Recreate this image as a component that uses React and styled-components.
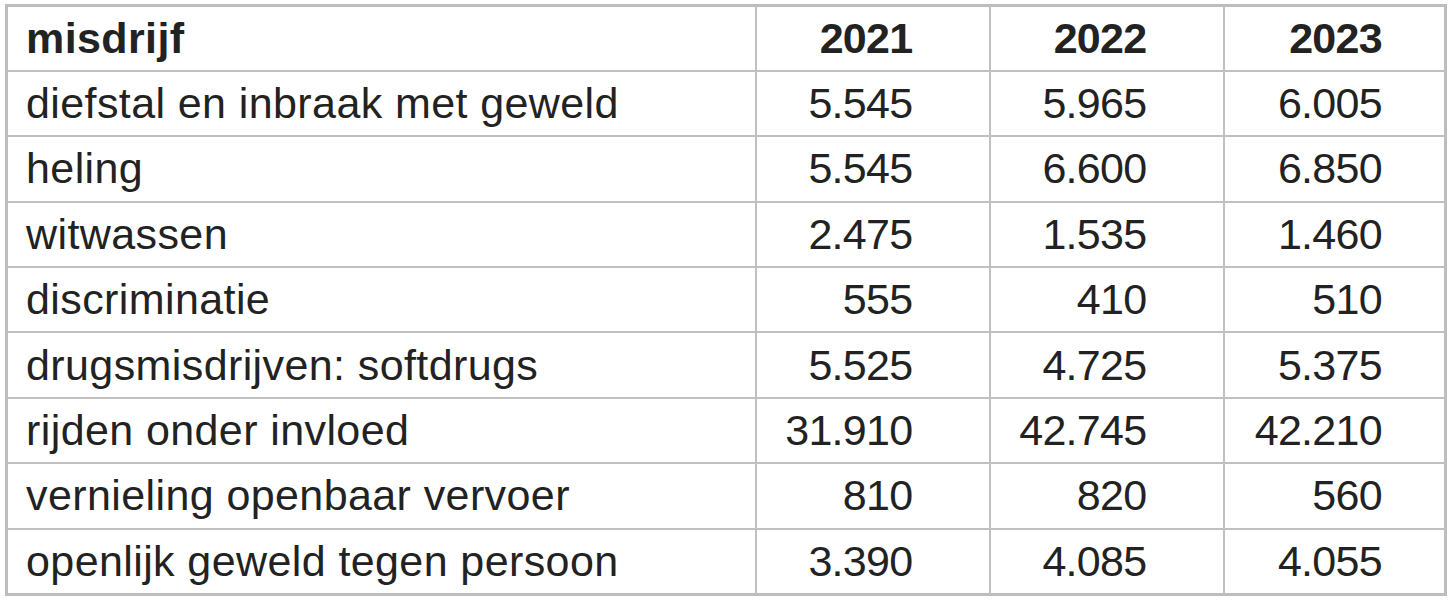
import React from 'react'
import styled, { createGlobalStyle } from 'styled-components'

const GlobalStyle = createGlobalStyle`
  html, body {
    margin: 0;
    padding: 0;
    background: #ffffff;
  }
  body {
    font-family: "Liberation Sans", Arial, sans-serif;
  }
`

const Page = styled.div`
  padding: 4px 5px 0 5px;
`

const Table = styled.table`
  width: 1439px;
  table-layout: fixed;
  border-collapse: collapse;
  border: 3px solid #bdbdbd;
  color: #222222;
  font-size: 43px;
`

const Row = styled.tr`
  height: 65.4px;
`

const Cell = styled.td`
  border: 2.5px solid #c0c0c0;
  padding: 0 ${(p) => p.$padRight || 18}px 0 18px;
  text-align: ${(p) => (p.$num ? 'right' : 'left')};
  font-weight: ${(p) => (p.$head ? 'bold' : 'normal')};
  letter-spacing: ${(p) => (p.$num ? '-0.7px' : '0.4px')};
  white-space: nowrap;
  vertical-align: middle;
  line-height: 1;
`

const columns = [
  { width: 749 },
  { width: 234, pad: 76 },
  { width: 234, pad: 76 },
  { width: 222, pad: 62 },
]

const data = [
  ['diefstal en inbraak met geweld', '5.545', '5.965', '6.005'],
  ['heling', '5.545', '6.600', '6.850'],
  ['witwassen', '2.475', '1.535', '1.460'],
  ['discriminatie', '555', '410', '510'],
  ['drugsmisdrijven: softdrugs', '5.525', '4.725', '5.375'],
  ['rijden onder invloed', '31.910', '42.745', '42.210'],
  ['vernieling openbaar vervoer', '810', '820', '560'],
  ['openlijk geweld tegen persoon', '3.390', '4.085', '4.055'],
]

const App = () => {
  const header = ['misdrijf', '2021', '2022', '2023']

  return (
    <Page>
      <GlobalStyle />
      <Table>
        <colgroup>
          {columns.map((c, i) => (
            <col key={i} style={{ width: c.width }} />
          ))}
        </colgroup>
        <thead>
          <Row>
            {header.map((h, i) => (
              <Cell as="th" key={h} $head $num={i > 0} $padRight={columns[i].pad}>
                {h}
              </Cell>
            ))}
          </Row>
        </thead>
        <tbody>
          {data.map((row) => (
            <Row key={row[0]}>
              {row.map((v, i) => (
                <Cell key={i} $num={i > 0} $padRight={columns[i].pad}>
                  {v}
                </Cell>
              ))}
            </Row>
          ))}
        </tbody>
      </Table>
    </Page>
  )
}

export default App
